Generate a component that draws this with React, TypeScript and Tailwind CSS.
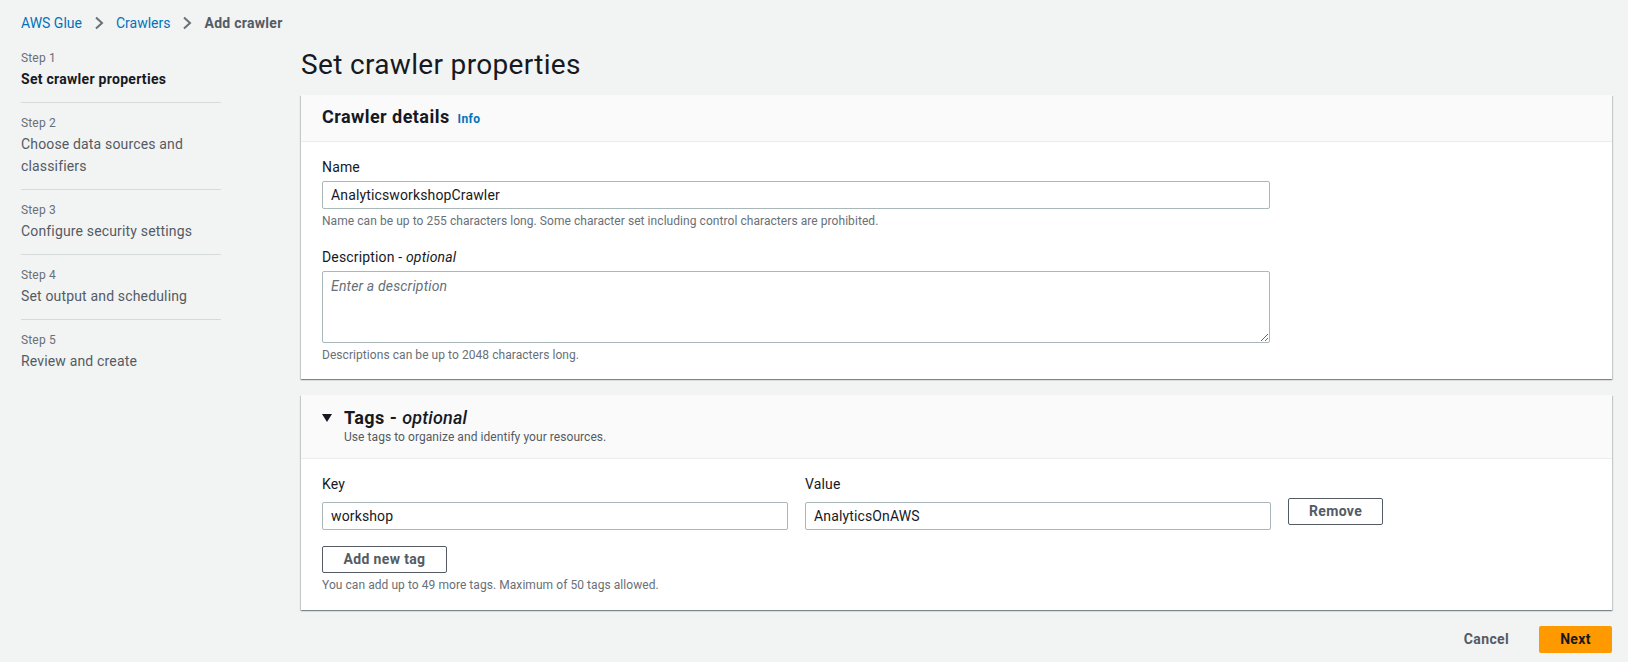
import React from "react"

// AWS Glue — Add crawler, step 1

const cardShadow =
  "shadow-[0_1px_1px_0_rgba(0,28,36,0.3),1px_1px_1px_0_rgba(0,28,36,0.15),-1px_1px_1px_0_rgba(0,28,36,0.15)]"

const steps = [
  { label: "Step 1", title: ["Set crawler properties"], active: true },
  { label: "Step 2", title: ["Choose data sources and", "classifiers"] },
  { label: "Step 3", title: ["Configure security settings"] },
  { label: "Step 4", title: ["Set output and scheduling"] },
  { label: "Step 5", title: ["Review and create"] },
]

function Chevron() {
  return (
    <svg width="10" height="14" viewBox="0 0 10 14" className="mx-[12px] shrink-0">
      <polyline points="2,1.5 8,7 2,12.5" fill="none" stroke="#687078" strokeWidth="2" />
    </svg>
  )
}

function TextInput({ value, className = "" }: { value: string; className?: string }) {
  return (
    <input
      defaultValue={value}
      className={`h-[28px] border border-[#aab7b8] rounded-[2px] bg-white px-[8px] text-[14px] tracking-[0.01em] text-[#16191f] outline-none ${className}`}
    />
  )
}

function NormalButton({ children, className = "" }: { children: React.ReactNode; className?: string }) {
  return (
    <button
      className={`h-[27px] border border-[#545b64] rounded-[2px] bg-white text-[14px] font-bold tracking-[0.025em] text-[#545b64] ${className}`}
    >
      {children}
    </button>
  )
}

export default function App() {
  return (
    <div
      className="w-full h-[662px] overflow-hidden bg-[#f2f3f3] pl-[21px] pr-[16px] text-[#16191f] tracking-[0.01em]"
      style={{ fontFamily: "Roboto, 'Liberation Sans', sans-serif" }}
    >
      {/* breadcrumb */}
      <nav className="flex items-center pt-[13px] h-[33px] text-[14px] leading-[20px] tracking-normal">
        <span className="text-[#0073bb]">AWS Glue</span>
        <Chevron />
        <span className="text-[#0073bb]">Crawlers</span>
        <Chevron />
        <span className="font-bold tracking-[0.02em] text-[#545b64]">Add crawler</span>
      </nav>

      <div className="flex pt-[14px]">
        {/* wizard steps */}
        <aside className="w-[200px] shrink-0 pt-[3px]">
          <ul>
            {steps.map((s, i) => (
              <li
                key={s.label}
                className={`${i > 0 ? "pt-[12px]" : ""} ${
                  i < steps.length - 1 ? "pb-[12px] border-b border-[#d5dbdb]" : ""
                }`}
              >
                <div className="text-[12px] leading-[16px] text-[#687078]">{s.label}</div>
                <div
                  className={`mt-[2px] text-[14px] leading-[22px] ${
                    s.active ? "font-bold tracking-[0.02em] text-[#16191f]" : "text-[#545b64]"
                  }`}
                >
                  {s.title.map((t) => (
                    <div key={t}>{t}</div>
                  ))}
                </div>
              </li>
            ))}
          </ul>
        </aside>

        {/* main */}
        <main className="ml-[80px] flex-1">
          <h1 className="text-[28px] leading-[36px] font-normal tracking-[0.012em] text-[#16191f]">
            Set crawler properties
          </h1>

          {/* crawler details */}
          <section className={`mt-[12px] bg-white ${cardShadow}`}>
            <div className="bg-[#fafafa] border-b border-[#eaeded] px-[21px] pt-[11px] pb-[13px] flex items-baseline">
              <h2 className="text-[18px] leading-[22px] font-bold tracking-[0.025em]">Crawler details</h2>
              <span className="ml-[8px] text-[12px] font-bold tracking-[0.03em] text-[#0073bb]">Info</span>
            </div>
            <div className="px-[21px] pt-[15px] pb-[16px]">
              <div className="w-[948px]">
                <label className="block text-[14px] leading-[20px]">Name</label>
                <TextInput value="AnalyticsworkshopCrawler" className="mt-[4px] w-full block" />
                <p className="mt-[4px] text-[12px] leading-[16px] tracking-[0.005em] text-[#687078]">
                  Name can be up to 255 characters long. Some character set including control characters are prohibited.
                </p>

                <label className="block mt-[18px] text-[14px] leading-[20px]">
                  Description - <i>optional</i>
                </label>
                <textarea
                  placeholder="Enter a description"
                  className="mt-[4px] block w-full h-[72px] border border-[#aab7b8] rounded-[2px] bg-white px-[8px] pt-[4px] text-[14px] leading-[20px] outline-none placeholder:italic placeholder:text-[#687078]"
                />
                <p className="mt-[4px] text-[12px] leading-[16px] tracking-[0.005em] text-[#687078]">
                  Descriptions can be up to 2048 characters long.
                </p>
              </div>
            </div>
          </section>

          {/* tags */}
          <section className={`mt-[16px] bg-white ${cardShadow}`}>
            <div className="bg-[#fafafa] border-b border-[#eaeded] pl-[21px] pt-[12px] pb-[13px]">
              <div className="flex items-center">
                <svg width="10" height="8" viewBox="0 0 10 8" className="shrink-0">
                  <polygon points="0,0 10,0 5,8" fill="#16191f" />
                </svg>
                <h2 className="ml-[12px] text-[18px] leading-[22px] font-bold tracking-[0.025em]">
                  Tags - <i className="font-medium tracking-[0.01em]">optional</i>
                </h2>
              </div>
              <p className="ml-[22px] text-[12px] leading-[16px] tracking-[0.005em] text-[#545b64]">
                Use tags to organize and identify your resources.
              </p>
            </div>
            <div className="px-[21px] pt-[15px] pb-[17px]">
              <div className="flex gap-x-[17px] items-start">
                <div className="w-[466px]">
                  <label className="block text-[14px] leading-[20px]">Key</label>
                  <TextInput value="workshop" className="mt-[8px] w-full block" />
                </div>
                <div className="w-[466px]">
                  <label className="block text-[14px] leading-[20px]">Value</label>
                  <TextInput value="AnalyticsOnAWS" className="mt-[8px] w-full block" />
                </div>
                <div className="pt-[24px]">
                  <NormalButton className="w-[95px]">Remove</NormalButton>
                </div>
              </div>
              <NormalButton className="mt-[16px] w-[125px]">Add new tag</NormalButton>
              <p className="mt-[4px] text-[12px] leading-[16px] tracking-[0.005em] text-[#687078]">
                You can add up to 49 more tags. Maximum of 50 tags allowed.
              </p>
            </div>
          </section>

          {/* footer actions */}
          <div className="mt-[16px] flex justify-end items-center gap-[10px]">
            <button className="h-[27px] px-[20px] text-[14px] font-bold tracking-[0.025em] text-[#545b64]">
              Cancel
            </button>
            <button className="h-[27px] w-[73px] rounded-[2px] bg-[#ff9900] text-[14px] font-bold tracking-[0.025em] text-[#16191f]">
              Next
            </button>
          </div>
        </main>
      </div>
    </div>
  )
}
